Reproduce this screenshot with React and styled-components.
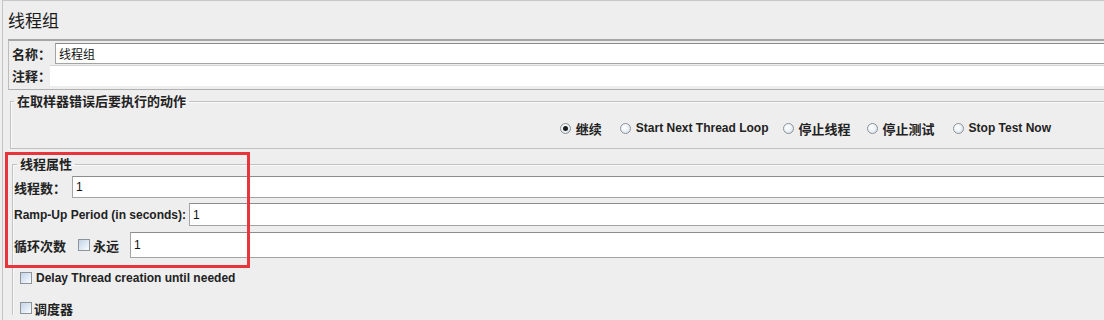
import React from "react";
import styled, { createGlobalStyle } from "styled-components";

const GlobalStyle = createGlobalStyle`
  html, body {
    margin: 0;
    padding: 0;
    background: #eeeeee;
    overflow: hidden;
  }
`;

const Page = styled.div`
  position: relative;
  width: 1104px;
  height: 320px;
  padding-left: 2px;
  box-sizing: border-box;
  background: #eeeeee;
  font-family: "Liberation Sans", "Noto Sans CJK SC", sans-serif;
  font-size: 12px;
  color: #222;
  overflow: hidden;
`;

const Frame = styled.div`
  height: 100%;
  border-left: 1px solid #c4c4c4;
  border-top: 1px solid #c8c8c8;
  box-sizing: border-box;
  display: flex;
  flex-direction: column;
`;

const Title = styled.div`
  margin-left: 5px;
  height: 38px;
  padding-top: 8px;
  box-sizing: border-box;
  font-family: "Noto Sans CJK SC", sans-serif;
  font-size: 17px;
  line-height: 22px;
  color: #1a1a1a;
`;

const NamePanel = styled.div`
  margin-left: 5px;
  border-top: 2px solid #a6a6a6;
  border-left: 1px solid #bdbdbd;
  border-bottom: 1px solid #b0b0b0;
  padding: 2px 0 3px 0;
  display: flex;
  flex-direction: column;
  gap: 1px;
`;

const Row = styled.div`
  display: flex;
  align-items: center;
  height: ${(p) => p.$h || 21}px;
  margin-top: ${(p) => p.$mt || 0}px;
  padding-left: ${(p) => p.$pl || 0}px;
`;

const Label = styled.span`
  flex: none;
  width: ${(p) => (p.$w ? `${p.$w}px` : "auto")};
  margin-right: ${(p) => p.$mr || 0}px;
  font-weight: bold;
  font-size: ${(p) => (p.$latin ? 12 : 13)}px;
  white-space: nowrap;
  color: #222;
`;

const Field = styled.div`
  flex: 1;
  align-self: stretch;
  background: #fff;
  border: 1px solid #a4a4a4;
  border-top-color: #8c8c8c;
  border-right: none;
  padding-left: 3px;
  display: flex;
  align-items: center;
  font-family: "Liberation Sans", "Noto Sans CJK SC", sans-serif;
  font-size: 12px;
  color: #111;
`;

const PlainField = styled(Field)`
  border: none;
  border-top: 1px solid #d4d4d4;
`;

const Group = styled.fieldset`
  margin: ${(p) => p.$mt || 0}px 0 0 ${(p) => p.$ml || 0}px;
  padding: ${(p) => p.$pad || "0"};
  border: 1px solid #c2c2c2;
  border-right: none;
  box-shadow: inset 1px 1px 0 #fafafa;
  min-width: 0;
  ${(p) => p.$open && "border-bottom: none;"}
`;

const Legend = styled.legend`
  margin-left: 3px;
  padding: 0 3px;
  font-family: "Noto Sans CJK SC", sans-serif;
  font-weight: bold;
  font-size: 13px;
  line-height: 14px;
  color: #222;
`;

const RadioRow = styled.div`
  display: flex;
  align-items: center;
  justify-content: flex-end;
  padding-right: 53px;
  height: 16px;
`;

const RadioItem = styled.label`
  display: flex;
  align-items: center;
  gap: 5px;
  margin-left: ${(p) => p.$ml || 0}px;
  font-weight: bold;
  font-size: ${(p) => (p.$cjk ? 13 : 12)}px;
  white-space: nowrap;
`;

const RadioDot = styled.span`
  width: 11px;
  height: 11px;
  border-radius: 50%;
  border: 1px solid #8d9296;
  box-sizing: border-box;
  background: radial-gradient(circle at 40% 40%, #ffffff 0%, #eef3f8 45%, #c7d6e6 100%);
  display: flex;
  align-items: center;
  justify-content: center;
  &::after {
    content: "";
    width: 5px;
    height: 5px;
    border-radius: 50%;
    background: #1c1c1c;
    display: ${(p) => (p.$on ? "block" : "none")};
  }
`;

const Check = styled.span`
  flex: none;
  width: 12px;
  height: 12px;
  border: 1px solid #8e9398;
  box-sizing: border-box;
  background: linear-gradient(135deg, #c2d3e7 0%, #e3ecf6 60%, #fbfdff 100%);
  margin-right: ${(p) => p.$mr || 4}px;
`;

const CheckText = styled.span`
  font-weight: bold;
  font-size: ${(p) => (p.$cjk ? 13 : 12)}px;
  white-space: nowrap;
`;

const Highlight = styled.div`
  position: absolute;
  left: 5px;
  top: 152px;
  width: 245px;
  height: 116px;
  border: 3px solid #e8343c;
  box-sizing: border-box;
  pointer-events: none;
`;

const actions = [
  { text: "继续", on: true, cjk: true, ml: 0 },
  { text: "Start Next Thread Loop", ml: 18 },
  { text: "停止线程", cjk: true, ml: 14 },
  { text: "停止测试", cjk: true, ml: 16 },
  { text: "Stop Test Now", ml: 18 },
];

export default function App() {
  return (
    <Page>
      <GlobalStyle />
      <Frame>
        <Title>线程组</Title>

        <NamePanel>
          <Row $pl={3}>
            <Label $w={43}>名称：</Label>
            <Field>线程组</Field>
          </Row>
          <Row $pl={3}>
            <Label $w={38}>注释：</Label>
            <PlainField />
          </Row>
        </NamePanel>

        <Group $ml={7} $mt={4} $pad="12px 0 12px 0">
          <Legend>在取样器错误后要执行的动作</Legend>
          <RadioRow>
            {actions.map((a) => (
              <RadioItem key={a.text} $ml={a.ml} $cjk={a.cjk}>
                <RadioDot $on={a.on} />
                {a.text}
              </RadioItem>
            ))}
          </RadioRow>
        </Group>

        <Group $ml={9} $mt={8} $pad="0 0 0 1px" $open>
          <Legend>线程属性</Legend>
          <Row $h={22} $mt={5}>
            <Label $w={58}>线程数：</Label>
            <Field>1</Field>
          </Row>
          <Row $h={23} $mt={5}>
            <Label $latin $mr={3}>Ramp-Up Period (in seconds):</Label>
            <Field>1</Field>
          </Row>
          <Row $h={26} $mt={6}>
            <Label $w={64}>循环次数</Label>
            <Check $mr={3} />
            <Label $w={37}>永远</Label>
            <Field>1</Field>
          </Row>
          <Row $h={14} $mt={13} $pl={6}>
            <Check />
            <CheckText>Delay Thread creation until needed</CheckText>
          </Row>
          <Row $h={14} $mt={16} $pl={6}>
            <Check $mr={2} />
            <CheckText $cjk>调度器</CheckText>
          </Row>
        </Group>
      </Frame>
      <Highlight />
    </Page>
  );
}
